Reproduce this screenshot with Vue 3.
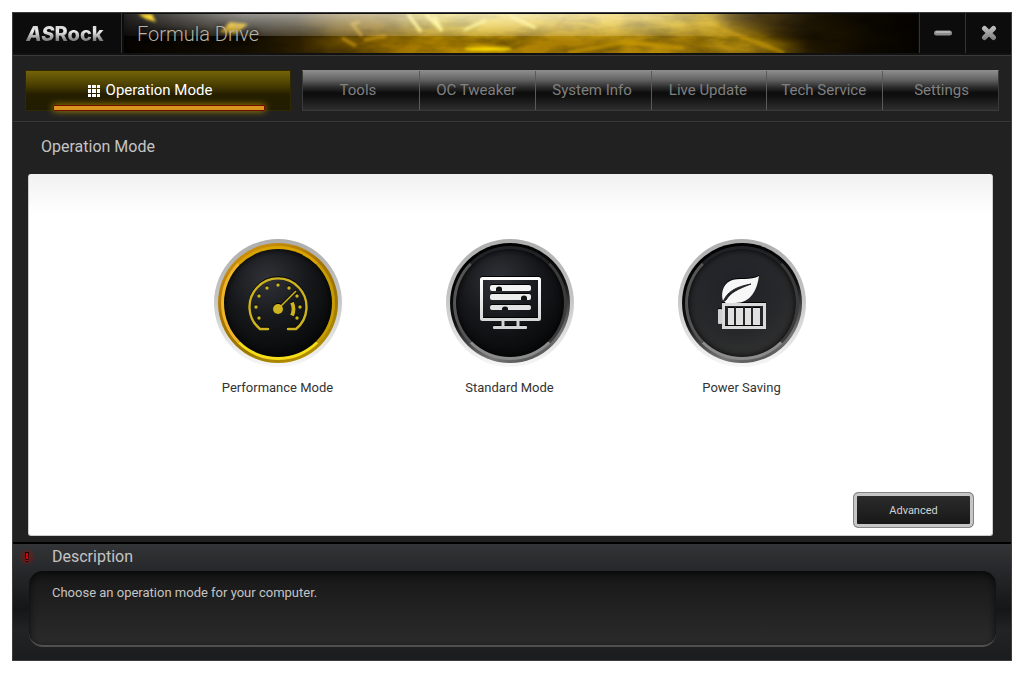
<script setup>
import { ref } from 'vue'

/**
 * Tabs shown on the right of the main navigation
 * @type {String[]}
 */
const tabs = ['Tools', 'OC Tweaker', 'System Info', 'Live Update', 'Tech Service', 'Settings']

/**
 * Operation modes that can be chosen
 * @type {Object[]}
 */
const modes = [
  { id: 'performance', label: 'Performance Mode' },
  { id: 'standard', label: 'Standard Mode' },
  { id: 'saving', label: 'Power Saving' }
]

const activeTab = ref('Operation Mode')
const activeMode = ref('performance')
</script>

<template>
  <div class="window">
    <header class="titlebar">
      <div class="logo"><i>AS</i>Rock</div>
      <div class="banner">
        <svg class="banner-art" viewBox="0 0 794 39" preserveAspectRatio="none" aria-hidden="true">
          <defs>
            <linearGradient id="gold" x1="0" x2="1" y1="0" y2="0">
              <stop offset="0" stop-color="#050300" />
              <stop offset="0.15" stop-color="#140e00" />
              <stop offset="0.22" stop-color="#2b1e00" />
              <stop offset="0.27" stop-color="#6b4d00" />
              <stop offset="0.36" stop-color="#a37800" />
              <stop offset="0.44" stop-color="#bd8f02" />
              <stop offset="0.55" stop-color="#a67a04" />
              <stop offset="0.68" stop-color="#b88c08" />
              <stop offset="0.76" stop-color="#5b4104" />
              <stop offset="0.86" stop-color="#241900" />
              <stop offset="0.94" stop-color="#0d0900" />
              <stop offset="1" stop-color="#060400" />
            </linearGradient>
            <linearGradient id="gloss" x1="0" x2="0" y1="0" y2="1">
              <stop offset="0" stop-color="#fff" stop-opacity="0.65" />
              <stop offset="1" stop-color="#fff" stop-opacity="0.2" />
            </linearGradient>
            <linearGradient id="fade" x1="0" x2="1" y1="0" y2="0">
              <stop offset="0" stop-color="#fff" stop-opacity="0.2" />
              <stop offset="0.15" stop-color="#fff" stop-opacity="0.85" />
              <stop offset="0.5" stop-color="#fff" />
              <stop offset="0.66" stop-color="#fff" stop-opacity="0.75" />
              <stop offset="0.8" stop-color="#fff" stop-opacity="0.15" />
              <stop offset="0.88" stop-color="#fff" stop-opacity="0" />
            </linearGradient>
            <mask id="gloss-mask"><rect width="794" height="39" fill="url(#fade)" /></mask>
            <filter id="soft" x="-20%" y="-60%" width="140%" height="220%">
              <feGaussianBlur stdDeviation="1.5" />
            </filter>
            <filter id="wide" x="-20%" y="-60%" width="140%" height="220%">
              <feGaussianBlur stdDeviation="8" />
            </filter>
            <filter id="smoke" x="0" y="0" width="100%" height="100%">
              <feTurbulence type="fractalNoise" baseFrequency="0.02 0.06" numOctaves="4" seed="12" />
              <feColorMatrix values="0 0 0 0 0  0 0 0 0 0  0 0 0 0 0  2 0 0 0 -0.75" />
            </filter>
          </defs>
          <rect width="794" height="39" fill="url(#gold)" />
          <g filter="url(#wide)">
            <ellipse cx="360" cy="2" rx="90" ry="14" fill="#f5d423" />
            <ellipse cx="480" cy="4" rx="120" ry="14" fill="#ecc420" />
            <path d="M560 0L680 39H590Z" fill="#e0b010" />
          </g>
          <rect width="794" height="39" filter="url(#smoke)" opacity="0.4" />
          <g filter="url(#soft)">
            <path d="M14 0H28L32 8L22 5Z" fill="#ffcf00" />
            <path d="M96 18L106 8L124 10L112 20Z" fill="#e0aa00" />
            <path d="M284 0L297 18M302 0L318 17L310 2M340 16L362 6M412 14L386 2" stroke="#fff060" stroke-width="3" fill="none" />
            <path d="M218 24L232 32M236 8L228 10L238 22M240 26L262 22M430 15L442 4" stroke="#b98a10" stroke-width="3" fill="none" />
            <ellipse cx="364" cy="35" rx="24" ry="2" fill="#ffe000" />
            <path d="M444 39L500 28L560 34M590 12L660 39" stroke="#d19e08" stroke-width="4" fill="none" opacity="0.6" />
          </g>
          <rect width="794" height="22" fill="url(#gloss)" mask="url(#gloss-mask)" />
        </svg>
        <h1>Formula Drive</h1>
      </div>
      <button class="control" type="button" aria-label="Minimize">
        <svg width="18" height="16" viewBox="0 0 18 16">
          <path d="M2.5 8H15.5" stroke="#8d8d8d" stroke-width="5" stroke-linecap="round" />
          <path d="M2.5 7H15.5" stroke="#b4b4b4" stroke-width="2" stroke-linecap="round" />
        </svg>
      </button>
      <button class="control" type="button" aria-label="Close">
        <svg width="16" height="16" viewBox="0 0 16 16">
          <defs>
            <linearGradient id="cross" gradientUnits="userSpaceOnUse" x1="0" x2="0" y1="0" y2="16">
              <stop offset="0" stop-color="#c9c9c9" />
              <stop offset="1" stop-color="#777" />
            </linearGradient>
          </defs>
          <path d="M3.5 3.5L12.5 12.500M12.5 3.5L3.5 12.500" stroke="url(#cross)" stroke-width="5" stroke-linecap="round" />
        </svg>
      </button>
    </header>

    <nav class="nav">
      <button class="main-tab" type="button" @click="activeTab = 'Operation Mode'">
        <svg width="12" height="12" viewBox="0 0 12 12" fill="#fff" aria-hidden="true">
          <path d="M0 0h3v3h-3zM4 0h4v3h-4zM9 0h3v3h-3zM0 4h3v4h-3zM4 4h4v4h-4zM9 4h3v4h-3zM0 9h3v3h-3zM4 9h4v3h-4zM9 9h3v3h-3z" />
        </svg>
        Operation Mode
      </button>
      <div class="tabs">
        <button v-for="tab in tabs" :key="tab" class="tab" type="button" @click="activeTab = tab">{{ tab }}</button>
      </div>
    </nav>

    <main class="content">
      <h2>{{ activeTab }}</h2>
      <section class="panel">
        <div class="modes">
          <button
            v-for="mode in modes"
            :key="mode.id"
            class="mode"
            :class="[mode.id, { active: mode.id === activeMode }]"
            type="button"
            @click="activeMode = mode.id"
          >
            <span class="dial">
              <span class="ring"><span class="face"></span></span>
              <svg v-if="mode.id === 'performance'" class="icon" viewBox="0 0 128 128" fill="none" stroke="#cdb31e">
                <path d="M54 90H46A28.5 28.5 0 1 1 82 90H74" stroke-width="2.4" stroke-linecap="round" stroke-linejoin="round" />
                <path d="M64 70L82 52" stroke-width="1.6" />
                <circle cx="64" cy="70" r="5" fill="#cdb31e" stroke="none" />
                <path d="M78 63.5Q81 70 78 76.5" stroke-width="3.8" />
                <path d="M64 46h0M53 49h0M75 49h0M45 57h0M83 57h0M42 68h0M86 68h0M45 79h0M83 79h0" stroke-width="3.4" stroke-linecap="round" />
              </svg>
              <svg v-else-if="mode.id === 'standard'" class="icon" viewBox="0 0 128 128">
                <defs>
                  <linearGradient id="screen" gradientUnits="userSpaceOnUse" x1="0" x2="0" y1="38" y2="90">
                    <stop offset="0" stop-color="#fff" />
                    <stop offset="1" stop-color="#cfcfcf" />
                  </linearGradient>
                </defs>
                <rect x="35.500" y="39.500" width="58" height="41" rx="1" fill="none" stroke="url(#screen)" stroke-width="3" />
                <path d="M57 82V88M72 82V88" stroke="#d5d5d5" stroke-width="3" />
                <rect x="47" y="87" width="34" height="3" rx="1" fill="#d5d5d5" />
                <rect x="44" y="46" width="41" height="6" rx="2" fill="#f4f4f4" />
                <rect x="44" y="55" width="41" height="6" rx="2" fill="#ececec" />
                <rect x="44" y="66" width="41" height="5" rx="2" fill="#e2e2e2" />
                <path d="M50 52V50a3 2.5 0 0 1 6 0V52ZM75 61V59a3 2.5 0 0 1 6 0V61ZM56 71V70a3 2.5 0 0 1 6 0V71Z" fill="#111316" />
              </svg>
              <svg v-else class="icon" viewBox="0 0 128 128">
                <path d="M81 37C79 51 73 64 57 64H48L45 62C43 56 44 46 52 42C60 38 73 42 81 37Z" fill="#f7f7f7" />
                <path d="M45 63C49 53 57 48 73 45C60 50 53 53 48 61Z" fill="#202226" stroke="#202226" />
                <rect x="45.500" y="65.500" width="41" height="23" fill="none" stroke="#dadada" stroke-width="3" />
                <rect x="40" y="70" width="4" height="15" rx="1" fill="#cfcfcf" />
                <path d="M50 69h6v17h-6zM58 69h7v17h-7zM67 69h6v17h-6zM75 69h7v17h-7z" fill="#e0e0e0" />
              </svg>
            </span>
            <span class="label">{{ mode.label }}</span>
          </button>
        </div>
        <button class="advanced" type="button">Advanced</button>
      </section>
    </main>

    <footer class="description">
      <div class="description-head">
        <svg width="24" height="24" viewBox="0 0 24 24" aria-hidden="true">
          <defs>
            <radialGradient id="alert">
              <stop offset="0" stop-color="#c00000" stop-opacity="0.5" />
              <stop offset="1" stop-color="#c00000" stop-opacity="0" />
            </radialGradient>
          </defs>
          <circle cx="12" cy="12" r="9" fill="url(#alert)" />
          <path d="M10 7H14V9L13 17H11L10 9Z" fill="#250000" />
          <path d="M11 8H13V14H11ZM11 15H13V16H11Z" fill="#c80808" />
        </svg>
        <h2>Description</h2>
      </div>
      <p class="description-text">Choose an operation mode for your computer.</p>
    </footer>
  </div>
</template>

<style>
body {
  margin: 0;
  background: #fff;
}
</style>

<style scoped>
* {
  box-sizing: border-box;
}

.window {
  display: flex;
  flex-direction: column;
  min-height: calc(100vh - 25px);
  margin: 12px 12px 13px;
  border: 1px solid #3d3d3d;
  background: #212121;
  color: #c4c4c4;
  font-family: Roboto, 'Noto Sans', sans-serif;
}

button {
  padding: 0;
  border: 0;
  color: inherit;
  font-family: inherit;
  cursor: pointer;
}

h1,
h2,
p {
  margin: 0;
  font-weight: 400;
}

.titlebar {
  display: flex;
  height: 42px;
  border-bottom: 2px solid #111;
  background: #0c0c0c;
}

.logo {
  width: 109px;
  padding-right: 4px;
  border-right: 1px solid #333;
  background: linear-gradient(#d8d8d8 14px, #eee 18px, #777 28px);
  background-clip: text;
  color: transparent;
  font: 800 20px/42px Inter, sans-serif;
  text-align: center;
}

.banner {
  position: relative;
  flex: 1;
  margin: 1px 1px 0 2px;
}

.banner-art {
  position: absolute;
  width: 100%;
  height: 100%;
}

h1 {
  position: relative;
  padding-left: 13px;
  color: #b9b3a2;
  font-size: 20px;
  font-weight: 300;
  line-height: 40px;
  text-shadow: 0 0 5px #000;
}

.control {
  display: flex;
  align-items: center;
  justify-content: center;
  width: 46px;
  padding-left: 1px;
  border-left: 1px solid #333;
  background: #0c0c0c;
}

.nav {
  display: grid;
  grid-template-columns: 266fr 697fr;
  gap: 11px;
  padding: 14px 12px 10px;
  border-top: 1px solid #3a3a3a;
  border-bottom: 1px solid #383838;
}

.main-tab {
  position: relative;
  display: flex;
  align-items: center;
  justify-content: center;
  gap: 6px;
  height: 41px;
  padding: 0 16px 2px 0;
  border: 1px solid #302900;
  background: linear-gradient(#74640a, #4c4000 35%, #251f00 60%, #211b00);
  color: #fff;
  font-size: 15px;
}

.main-tab::after {
  content: '';
  position: absolute;
  right: 25px;
  bottom: -1px;
  left: 27px;
  height: 4px;
  border: 1px solid #700c00;
  border-radius: 1px;
  background: #d9951e;
  box-shadow: 0 0 7px #b59400;
}

.main-tab svg {
  margin-top: 3px;
}

.tabs {
  display: grid;
  grid-template-columns: repeat(6, 1fr);
  border: 1px solid #3a3a3a;
  border-top-color: #8c8c8c;
}

.tab {
  padding: 0 2px 2px 0;
  border-left: 1px solid #5a5a5a;
  background: linear-gradient(#8b8b8b, #646464 22%, #2b2b2b 42%, #0c0c0c 56%, #111 66%, #2e2e2e);
  color: #808080;
  font-size: 15px;
}

.tab:first-child {
  padding-right: 6px;
  border-left: 0;
}

.tab:last-child {
  padding-right: 0;
  padding-left: 2px;
}

.content {
  display: flex;
  flex: 1;
  flex-direction: column;
  padding: 0 18px 6px 15px;
}

h2 {
  font-size: 16px;
}

.content h2 {
  padding-left: 13px;
  line-height: 50px;
}

.panel {
  display: flex;
  flex: 1;
  flex-direction: column;
  justify-content: space-between;
  margin-top: 2px;
  padding: 65px 18px 7px;
  border: 1px solid #ccc;
  border-top: 0;
  border-radius: 3px;
  background: linear-gradient(#f1f1f1, #fff 40px);
}

.modes {
  display: flex;
  justify-content: center;
  gap: 104px;
  padding-right: 2px;
}

.mode {
  width: 128px;
  background: none;
  color: #333;
  font-size: 13px;
}

.dial {
  position: relative;
  display: block;
  height: 128px;
  padding: 4px;
  border-radius: 50%;
  background: linear-gradient(#adadad, #c4c4c4 45%, #f7f7f7);
}

.ring {
  display: block;
  height: 100%;
  padding: 3px;
  border-radius: 50%;
  background: linear-gradient(160deg, #000 15%, #111 50%, #777 80%, #333);
}

.face {
  display: block;
  height: 100%;
  border: 3px solid #333;
  border-color: #202225 #3b3b3b #8c8c8c #555;
  border-radius: 50%;
  background: radial-gradient(circle at 40% 28%, #303238, #17181b 40%, #090a0b 75%);
  box-shadow: inset 0 0 7px #000;
}

.saving .face {
  background: radial-gradient(circle at 45% 35%, #202229, #27282a 50%, #323232 80%);
}

.active .ring {
  background: linear-gradient(150deg, #d99b16, #a97402 40%, #9a7600 65%, #c09c00);
}

.active .face {
  border-color: #d9a400 #c79c00 #f6df18 #f0b528;
}

.icon {
  position: absolute;
  inset: 0;
  filter: drop-shadow(0 -1px 0 #000);
}

.label {
  display: block;
  padding-top: 13px;
  line-height: 16px;
}

.advanced {
  align-self: flex-end;
  width: 121px;
  height: 36px;
  border: 1px solid #858585;
  border-radius: 5px;
  background: linear-gradient(#2d2d2d, #161616);
  box-shadow: inset 0 0 0 3px #c6c6c6;
  color: #d2d2d2;
  font-size: 11px;
}

.description {
  height: 118px;
  border-top: 2px solid #000;
  padding: 0 15px 0 16px;
  background: linear-gradient(#333436, #26272a 24%, #151617 56%, #222325 75%, #1b1c1d);
}

.description-head {
  display: flex;
  align-items: center;
  height: 27px;
  padding-bottom: 2px;
}

.description-head svg {
  margin-left: -14px;
}

.description-head h2 {
  padding-left: 13px;
  line-height: 24px;
}

.description-text {
  height: 76px;
  padding: 13px 23px;
  border-bottom: 2px solid #505050;
  border-radius: 14px;
  background: linear-gradient(#171717, #2b2b2b);
  box-shadow: inset 0 3px 7px #090909;
  font-size: 13px;
  line-height: 18px;
}
</style>
